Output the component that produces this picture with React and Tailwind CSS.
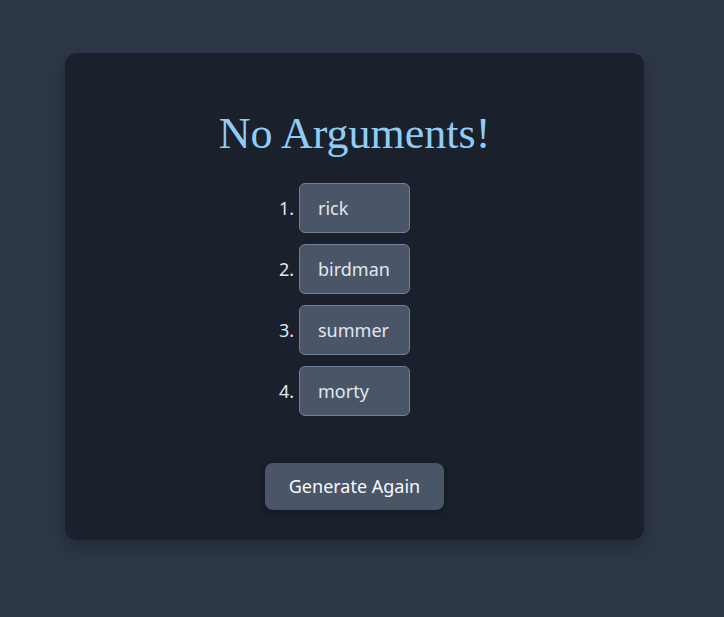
import React from "react";

const names = ["rick", "birdman", "summer", "morty"];

export default function App() {
  return (
    <div className="min-h-[617px] bg-[#2d3748] pt-[53px] font-['Noto_Sans',sans-serif]">
      <div className="ml-[65px] w-[579px] h-[487px] rounded-xl bg-[#1a202c] shadow-[0_8px_20px_rgba(0,0,0,0.25)] pt-[106px] flex flex-col items-center">
        <h1 className="font-['Liberation_Serif',serif] text-[44px] leading-none text-[#90cdf4] -mt-[47px]">
          No Arguments!
        </h1>
        <div className="mt-[27px] flex flex-col gap-[11px] w-full">
          {names.map((n, i) => (
            <div key={n} className="grid grid-cols-[1fr_111px_1fr] items-center">
              <span className="justify-self-end pr-[5px] text-[18px] text-[#e2e8f0]">{i + 1}.</span>
              <input
                readOnly
                value={n}
                className="h-[50px] w-[111px] rounded-md border border-[#718096] bg-[#4a5568] px-[18px] text-[18px] text-[#e2e8f0] outline-none"
              />
              <span />
            </div>
          ))}
        </div>
        <button className="mt-[47px] h-[47px] w-[179px] rounded-lg bg-[#4a5568] text-[18px] text-[#f7fafc] shadow-[0_2px_6px_rgba(0,0,0,0.3)]">
          Generate Again
        </button>
      </div>
    </div>
  );
}
